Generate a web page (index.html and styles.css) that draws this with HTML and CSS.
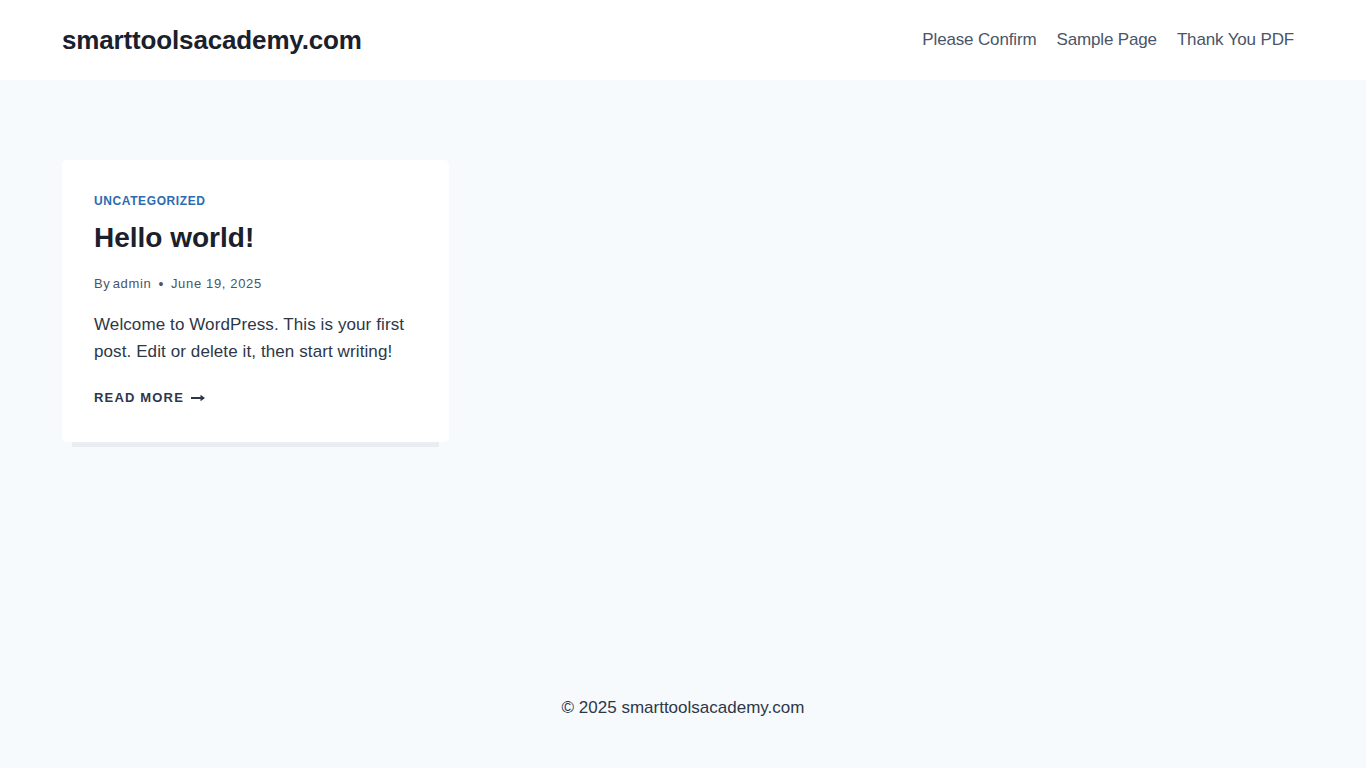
FILE: index.html
```html
<!DOCTYPE html>
<html lang="en">
<head>
    <meta charset="UTF-8">
    <meta name="viewport" content="width=device-width, initial-scale=1.0">
    <title>smarttoolsacademy.com</title>
    <link rel="stylesheet" href="styles.css">
</head>
<body>
    <header class="site-header">
        <div class="site-container header-inner">
            <a href="#" class="site-title">smarttoolsacademy.com</a>
            <nav class="main-nav">
                <a href="#">Please Confirm</a>
                <a href="#">Sample Page</a>
                <a href="#">Thank You PDF</a>
            </nav>
        </div>
    </header>

    <main class="site-main">
        <div class="site-container posts-grid">
            <article class="post-card">
                <div class="entry-taxonomies"><a href="#">Uncategorized</a></div>
                <h2 class="entry-title"><a href="#">Hello world!</a></h2>
                <div class="entry-meta">
                    <span>By <a href="#">admin</a></span>
                    <span class="meta-sep">•</span>
                    <span>June 19, 2025</span>
                </div>
                <p class="entry-summary">Welcome to WordPress. This is your first post. Edit or delete it, then start writing!</p>
                <a href="#" class="more-link">Read more
                    <svg width="14" height="8" viewBox="0 0 14 8" aria-hidden="true">
                        <path d="M0 4h11" stroke="currentColor" stroke-width="2" fill="none"/>
                        <path d="M9.5 0.8L14 4L9.5 7.2Z" fill="currentColor"/>
                    </svg>
                </a>
            </article>
        </div>
    </main>

    <footer class="site-footer">
        <p>&copy; 2025 smarttoolsacademy.com</p>
    </footer>
</body>
</html>
```

FILE: styles.css
```css
* {
    box-sizing: border-box;
}

body {
    margin: 0;
    min-height: 100vh;
    display: flex;
    flex-direction: column;
    font-family: "Liberation Sans", Arial, sans-serif;
    background: #f7fafc;
    color: #2d3748;
}

a {
    text-decoration: none;
    color: inherit;
}

.site-container {
    max-width: 1290px;
    margin: 0 auto;
    padding: 0 24px;
    width: 100%;
}

.site-header {
    background: #ffffff;
    height: 80px;
}

.header-inner {
    height: 100%;
    display: flex;
    align-items: center;
    justify-content: space-between;
}

.site-title {
    font-size: 26px;
    font-weight: 700;
    color: #1a202c;
    letter-spacing: -0.15px;
}

.main-nav {
    display: flex;
}

.main-nav a {
    font-size: 17px;
    color: #4a5568;
    padding: 10px;
    letter-spacing: -0.15px;
}

.site-main {
    flex: 1;
    padding-top: 80px;
}

.posts-grid {
    display: grid;
    grid-template-columns: repeat(3, 1fr);
    gap: 40px;
}

.post-card {
    background: #ffffff;
    border-radius: 5px;
    padding: 33px 32px 31px;
    box-shadow: 0 15px 0 -10px #e9edf1;
}

.entry-taxonomies {
    font-size: 12px;
    line-height: 16px;
    font-weight: 700;
    text-transform: uppercase;
    letter-spacing: 0.05em;
}

.entry-taxonomies a {
    color: #2b6cb0;
}

.entry-title {
    margin: 8px 0 0;
    font-size: 28px;
    line-height: 42px;
    color: #1a202c;
}

.entry-meta {
    margin-top: 14px;
    font-size: 13px;
    line-height: 22px;
    letter-spacing: 0.05em;
    color: #4a5568;
    display: flex;
    align-items: center;
}

.entry-meta a {
    margin-left: -2px;
}

.entry-meta .meta-sep {
    margin: 0 7px;
    font-size: 14px;
}

.entry-summary {
    margin: 16px 0 0;
    font-size: 17px;
    line-height: 1.6;
    color: #2d3748;
    letter-spacing: 0.1px;
}

.more-link {
    display: inline-flex;
    align-items: center;
    gap: 7px;
    margin-top: 20px;
    font-size: 13px;
    line-height: 26px;
    font-weight: 700;
    text-transform: uppercase;
    letter-spacing: 0.09em;
    color: #2d3748;
}

.site-footer {
    padding: 30px 0 47px;
    text-align: center;
}

.site-footer p {
    margin: 0;
    font-size: 17px;
    line-height: 27px;
    color: #2d3748;
}
```
